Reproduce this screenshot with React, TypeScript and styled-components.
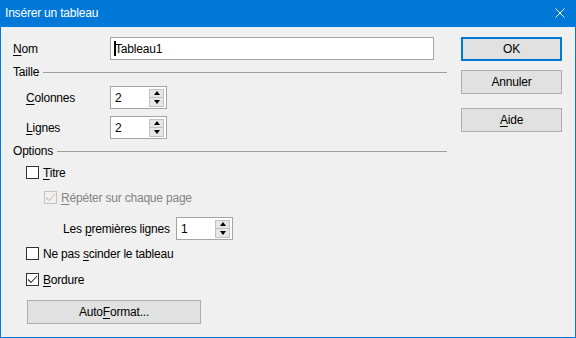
import React from "react";
import styled, { createGlobalStyle } from "styled-components";

const Global = createGlobalStyle`
  html, body { margin: 0; padding: 0; background: #f0f0f0; }
  body { font-family: "Liberation Sans", Arial, sans-serif; font-size: 12px; letter-spacing: -0.2px; color: #000; }
  * { box-sizing: border-box; }
`;

const Window = styled.div`
  width: 576px;
  height: 338px;
  display: flex;
  flex-direction: column;
  background: #f0f0f0;
  border: 1px solid #0078d7;
  border-top: none;
`;

const TitleBar = styled.div`
  height: 27px;
  margin: 0 -1px;
  background: #0078d7;
  color: #fff;
  display: flex;
  align-items: center;
  justify-content: space-between;
  padding: 0 11px 1px 5px;
  font-size: 12px;
`;

const Body = styled.div`
  flex: 1;
  display: flex;
  gap: 14px;
  padding: 10px 0 0 12px;
`;

const LeftCol = styled.div`
  width: 434px;
  display: flex;
  flex-direction: column;
`;

const RightCol = styled.div`
  width: 101px;
  display: flex;
  flex-direction: column;
`;

const Row = styled.div<{ $mt?: number; $pl?: number; $h?: number }>`
  display: flex;
  align-items: center;
  height: ${(p) => p.$h ?? 23}px;
  margin-top: ${(p) => p.$mt ?? 0}px;
  padding-left: ${(p) => p.$pl ?? 0}px;
`;

const Label = styled.span<{ $w?: number; $disabled?: boolean }>`
  width: ${(p) => (p.$w ? `${p.$w}px` : "auto")};
  flex: none;
  white-space: nowrap;
  color: ${(p) => (p.$disabled ? "#838383" : "#000")};
`;

const U = styled.u`
  text-decoration: underline;
  text-underline-offset: 2px;
`;

const TextInput = styled.div`
  width: 324px;
  height: 23px;
  border: 1px solid #a5a5a5;
  background: #fff;
  display: flex;
  align-items: center;
  padding-left: 3px;
  position: relative;
`;

const Caret = styled.span`
  width: 2px;
  height: 15px;
  background: #000;
  flex: none;
  margin-right: -1px;
  position: relative;
  z-index: 1;
`;

const SectionHead = styled.div<{ $mt: number }>`
  display: flex;
  align-items: center;
  height: 16px;
  margin-top: ${(p) => p.$mt}px;
  gap: 4px;
`;

const Rule = styled.div`
  flex: 1;
  height: 1px;
  background: #a0a0a0;
  margin-top: 1px;
`;

const SpinBox = styled.div`
  width: 57px;
  height: 23px;
  border: 1px solid #a5a5a5;
  background: #fff;
  display: flex;
  align-items: center;
  padding: 0 2px 0 4px;
`;

const SpinValue = styled.span`
  flex: 1;
`;

const SpinButtons = styled.div`
  width: 15px;
  height: 18px;
  border: 1px solid #c2c2c2;
  background: #e6e6e6;
  display: flex;
  flex-direction: column;
`;

const SpinHalf = styled.div<{ $top?: boolean }>`
  flex: 1;
  display: flex;
  align-items: center;
  justify-content: center;
  border-bottom: ${(p) => (p.$top ? "1px solid #c2c2c2" : "none")};
`;

const Arrow = styled.span<{ $up?: boolean }>`
  width: 0;
  height: 0;
  border-left: 3.5px solid transparent;
  border-right: 3.5px solid transparent;
  ${(p) => (p.$up ? "border-bottom: 4px solid #000;" : "border-top: 4px solid #000;")}
`;

const CheckRow = styled.div<{ $mt: number; $pl: number }>`
  display: flex;
  align-items: center;
  height: 19px;
  margin-top: ${(p) => p.$mt}px;
  padding-left: ${(p) => p.$pl}px;
  gap: 4px;
`;

const Box = styled.span<{ $disabled?: boolean }>`
  width: 13px;
  height: 13px;
  flex: none;
  border: 1px solid ${(p) => (p.$disabled ? "#c4c4c4" : "#333")};
  background: ${(p) => (p.$disabled ? "#f0f0f0" : "#fff")};
  display: flex;
  align-items: center;
  justify-content: center;
`;

const Button = styled.div<{ $default?: boolean; $mt?: number; $w?: number; $ml?: number }>`
  width: ${(p) => p.$w ?? 101}px;
  height: 24px;
  margin-top: ${(p) => p.$mt ?? 0}px;
  margin-left: ${(p) => p.$ml ?? 0}px;
  background: #e1e1e1;
  border: ${(p) => (p.$default ? "2px solid #0078d7" : "1px solid #adadad")};
  display: flex;
  align-items: center;
  justify-content: center;
`;

const Spin = ({ value }: { value: string }) => (
  <SpinBox>
    <SpinValue>{value}</SpinValue>
    <SpinButtons>
      <SpinHalf $top>
        <Arrow $up />
      </SpinHalf>
      <SpinHalf>
        <Arrow />
      </SpinHalf>
    </SpinButtons>
  </SpinBox>
);

const Check = ({ checked, disabled }: { checked?: boolean; disabled?: boolean }) => (
  <Box $disabled={disabled}>
    {checked && (
      <svg width="11" height="11" viewBox="0 0 11 11">
        <path
          d="M1 5.5 L4 8.5 L10 2"
          fill="none"
          stroke={disabled ? "#c4c4c4" : "#333"}
          strokeWidth="1.1"
        />
      </svg>
    )}
  </Box>
);

export default function App() {
  return (
    <>
      <Global />
      <Window>
        <TitleBar>
          <span>Insérer un tableau</span>
          <svg width="10" height="10" viewBox="0 0 10 10">
            <path d="M0.5 0.5 L9.5 9.5 M9.5 0.5 L0.5 9.5" stroke="#fff" strokeWidth="1" />
          </svg>
        </TitleBar>
        <Body>
          <LeftCol>
            <Row>
              <Label $w={97}>
                <U>N</U>om
              </Label>
              <TextInput>
                <Caret />
                <span>Tableau1</span>
              </TextInput>
            </Row>
            <SectionHead $mt={4}>
              <Label>Taille</Label>
              <Rule />
            </SectionHead>
            <Row $mt={6} $pl={13}>
              <Label $w={84}>
                <U>C</U>olonnes
              </Label>
              <Spin value="2" />
            </Row>
            <Row $mt={7} $pl={13}>
              <Label $w={84}>
                <U>L</U>ignes
              </Label>
              <Spin value="2" />
            </Row>
            <SectionHead $mt={4}>
              <Label>Options</Label>
              <Rule />
            </SectionHead>
            <CheckRow $mt={4} $pl={13}>
              <Check />
              <Label>
                <U>T</U>itre
              </Label>
            </CheckRow>
            <CheckRow $mt={6} $pl={31}>
              <Check checked disabled />
              <Label $disabled>
                <U>R</U>épéter sur chaque page
              </Label>
            </CheckRow>
            <Row $mt={10} $pl={50}>
              <Label $w={113}>
                Les <U>p</U>remières lignes
              </Label>
              <Spin value="1" />
            </Row>
            <CheckRow $mt={4} $pl={13}>
              <Check />
              <Label>
                Ne pas <U>s</U>cinder le tableau
              </Label>
            </CheckRow>
            <CheckRow $mt={7} $pl={13}>
              <Check checked />
              <Label>
                <U>B</U>ordure
              </Label>
            </CheckRow>
            <Button $mt={11} $ml={14} $w={174}>
              <span>
                Auto<U>F</U>ormat...
              </span>
            </Button>
          </LeftCol>
          <RightCol>
            <Button $default>OK</Button>
            <Button $mt={9}>Annuler</Button>
            <Button $mt={14}>
              <span>
                <U>A</U>ide
              </span>
            </Button>
          </RightCol>
        </Body>
      </Window>
    </>
  );
}
